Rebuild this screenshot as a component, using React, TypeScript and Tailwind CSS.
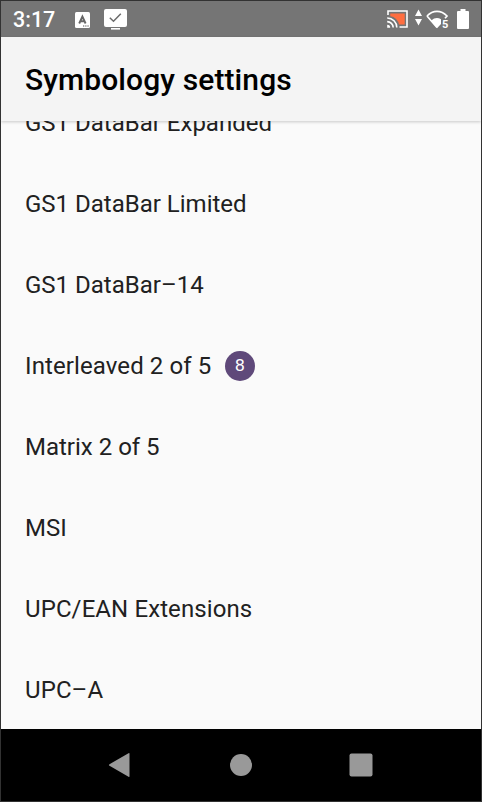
const symbologies: { name: string; badge?: string; wide?: boolean }[] = [
  { name: "GS1 DataBar Expanded" },
  { name: "GS1 DataBar Limited" },
  { name: "GS1 DataBar–14" },
  { name: "Interleaved 2 of 5", badge: "8", wide: true },
  { name: "Matrix 2 of 5" },
  { name: "MSI" },
  { name: "UPC/EAN Extensions", wide: true },
  { name: "UPC–A", wide: true },
];

function StatusBar() {
  return (
    <div className="flex h-9 shrink-0 items-center bg-[#757575] pl-3 text-white">
      <span className="w-[62px] pt-0.5 text-[21.5px] leading-9 font-medium">3:17</span>
      <svg className="mt-0.5 h-4 w-[15px]" viewBox="0 0 15 16">
        <rect width="15" height="16" rx="1.5" fill="#fff" />
        <path d="M4.2 11.500 7.400 4.500 10.600 11.500M5.400 9.200h4" fill="none" stroke="#666" strokeWidth="1.9" />
        <path d="M8 14h1.300M10.200 14h1.300M12.400 14h1.300" stroke="#555" strokeWidth="1.2" />
      </svg>
      <svg className="ml-3.5 h-[21px] w-[23px]" viewBox="0 0 23 21">
        <rect y="0" width="23" height="18" rx="2" fill="#fff" />
        <path d="M7 19.800h9" stroke="#fff" strokeWidth="1.6" />
        <path d="M5.800 8.800 9.500 12.300 16.800 4.800" fill="none" stroke="#6b6b6b" strokeWidth="1.5" />
      </svg>
      <svg className="ml-[260px] h-[18px] w-[21px]" viewBox="0 0 21 18">
        <path d="M1 5V1h19v16h-7.500" fill="none" stroke="#fff" strokeWidth="1.6" />
        <path d="M3.300 3.400h14.400v11.200H12A10 10 0 0 0 3.300 6.300z" fill="#ff6e40" />
        <path d="M.2 8a9.500 9.500 0 0 1 9.600 9.600M.2 11.600a6 6 0 0 1 6 6" fill="none" stroke="#fff" strokeWidth="1.6" />
        <path d="M.2 14.800a3 3 0 0 1 3 3h-3z" fill="#fff" />
      </svg>
      <svg className="-mt-1 ml-[7px] h-[17px] w-[7px]" viewBox="0 0 7 17">
        <path d="M0 7 3.500.5 7 7zM0 10h7l-3.500 6.500z" fill="#fff" />
      </svg>
      <svg className="ml-1 h-[19px] w-[23px]" viewBox="0 0 23 19">
        <path d="M1 6C7-.2 15-.2 21 6L19 8.200M1 6 11 17.500" fill="none" stroke="#fff" strokeWidth="1.7" />
        <path d="M5.200 10.500Q10 6.300 15 9.200V14L11 18.200z" fill="#fff" />
        <text x="16" y="17.500" fontSize="11" fontWeight="700" fill="#fff">5</text>
      </svg>
      <svg className="ml-2 h-5 w-3" viewBox="0 0 12 20">
        <path d="M3.500 0h5v2H11q1 0 1 1v16q0 1-1 1H1q-1 0-1-1V3q0-1 1-1h2.500z" fill="#fff" />
      </svg>
    </div>
  );
}

function NavigationBar() {
  return (
    <div className="flex h-[72px] shrink-0 items-center bg-black">
      <svg className="ml-[107px] h-[26px] w-[23px]" viewBox="0 0 23 26">
        <path d="M1.500 12.200 20.500 1.200q1-.6 1 .5v22.600q0 1.100-1 .5L1.500 13.800q-1.200-.8 0-1.600z" fill="#999" />
      </svg>
      <div className="ml-[99px] size-[22px] rounded-full bg-[#999]" />
      <svg className="ml-[97px] size-6" viewBox="0 0 24 24">
        <rect x="0.500" y="0.500" width="23" height="23" rx="2" fill="#999" />
      </svg>
    </div>
  );
}

export default function App() {
  return (
    <div className="flex h-[802px] w-[482px] flex-col overflow-hidden border border-[#323232] bg-[#fafafa] font-[Roboto,sans-serif]">
      <StatusBar />
      <header className="z-10 flex h-[84px] shrink-0 items-center bg-[#f4f4f4] pt-0.5 pl-6 shadow-[0_1px_3px_rgba(0,0,0,0.2)]">
        <h1 className="text-[30px] leading-9 font-medium tracking-[0.1px] text-black">Symbology settings</h1>
      </header>
      <main className="flex min-h-0 flex-1 flex-col justify-end overflow-hidden">
        <ul className="-mb-px">
          {symbologies.map((item) => (
            <li
              key={item.name}
              className={`flex h-[81px] items-center pl-6 text-[24px] text-[#212121] ${item.wide ? "tracking-[0.1px]" : "tracking-normal"}`}
            >
              {item.name}
              {item.badge && (
                <span className="mt-px ml-3.5 flex size-[30px] items-center justify-center rounded-full bg-[#5f497a] pr-px font-['DejaVu_Sans',sans-serif] text-[16px] tracking-normal text-white">
                  {item.badge}
                </span>
              )}
            </li>
          ))}
        </ul>
      </main>
      <NavigationBar />
    </div>
  );
}
